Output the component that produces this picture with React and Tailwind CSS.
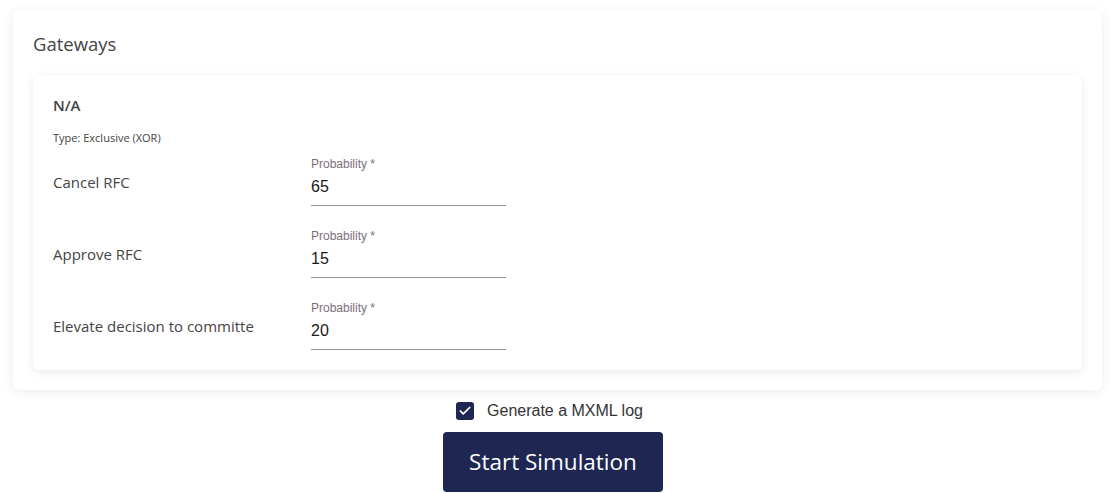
import { Check } from 'lucide-react';

const paths = [
    { name: 'Cancel RFC', value: '65' },
    { name: 'Approve RFC', value: '15' },
    { name: 'Elevate decision to committe', value: '20' },
];

const ui = { fontFamily: '"Open Sans", "Noto Sans", sans-serif' };
const mat = { fontFamily: '"Liberation Sans", Arial, sans-serif' };

const ProbabilityField = ({ value }) => (
    <div className="w-[195px] flex flex-col border-b border-[#949494]" style={mat}>
        <label className="text-[12px] leading-[16px] text-[#7b6f7d]">Probability *</label>
        <div className="mt-[3px] pb-[6px] text-[16px] leading-[24px] text-[#1a1a1a]">{value}</div>
    </div>
);

export default function App() {
    return (
        <div className="min-h-screen bg-white pt-[10px] px-[13px] pr-[8px]">
            <div className="rounded-[6px] bg-white shadow-[0_2px_12px_rgba(0,0,0,0.08)] p-[20px]">
                <h2 className="text-[18.5px] leading-[28px] text-[#444] mb-[17px]" style={ui}>Gateways</h2>
                <div className="rounded-[6px] bg-white shadow-[0_2px_10px_rgba(0,0,0,0.09)] px-[20px] pt-[19px] pb-[20px]" style={ui}>
                    <div className="text-[15px] leading-[22px] font-semibold text-[#444]">N/A</div>
                    <div className="mt-[14px] text-[11px] leading-[16px] text-[#444]">Type: Exclusive (XOR)</div>
                    <div className="mt-[10px] flex flex-col gap-[22px]">
                        {paths.map((p) => (
                            <div key={p.name} className="flex items-center">
                                <div className="w-[258px] text-[15px] leading-[22px] text-[#444] pt-[2px]">{p.name}</div>
                                <ProbabilityField value={p.value} />
                            </div>
                        ))}
                    </div>
                </div>
            </div>

            <div className="mr-[9px] flex flex-col items-center">
                <label className="mt-[11px] mr-[7px] flex items-center gap-[13px] text-[16px] leading-[20px] text-[#333]" style={mat}>
                    <span className="w-[18px] h-[18px] rounded-[3px] bg-[#1e2752] flex items-center justify-center">
                        <Check size={14} strokeWidth={3} color="white" />
                    </span>
                    Generate a MXML log
                </label>
                <button className="mt-[11px] h-[60px] px-[26px] rounded-[4px] bg-[#1e2752] text-white text-[22.5px]" style={ui}>
                    Start Simulation
                </button>
            </div>
        </div>
    );
}
